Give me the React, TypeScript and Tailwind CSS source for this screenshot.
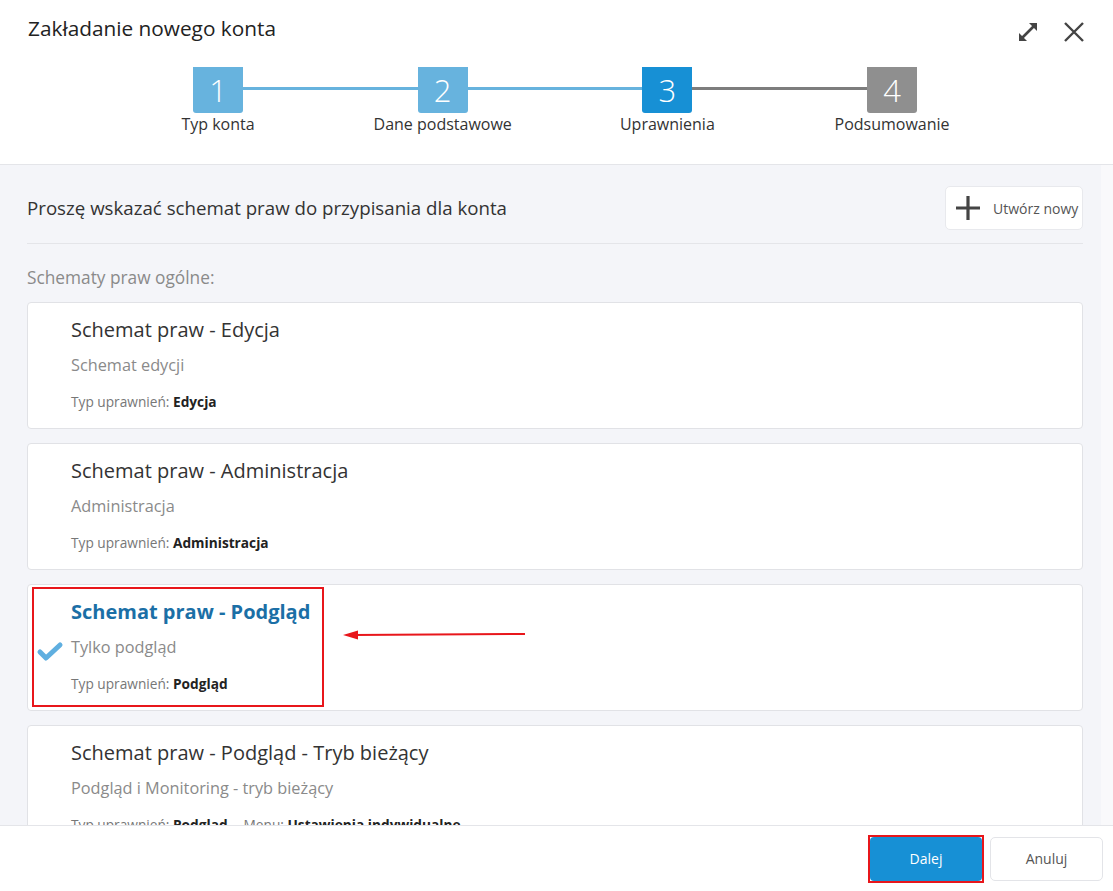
import React from 'react';

type Scheme = {
  id: number;
  title: string;
  description: string;
  type: string;
  menu?: string;
};

const schemes: Scheme[] = [
  { id: 1, title: 'Schemat praw - Edycja', description: 'Schemat edycji', type: 'Edycja' },
  { id: 2, title: 'Schemat praw - Administracja', description: 'Administracja', type: 'Administracja' },
  { id: 3, title: 'Schemat praw - Podgląd', description: 'Tylko podgląd', type: 'Podgląd' },
  {
    id: 4,
    title: 'Schemat praw - Podgląd - Tryb bieżący',
    description: 'Podgląd i Monitoring - tryb bieżący',
    type: 'Podgląd',
    menu: 'Ustawienia indywidualne',
  },
];

const steps = [
  { n: 1, label: 'Typ konta', box: 'bg-[#67b3de]' },
  { n: 2, label: 'Dane podstawowe', box: 'bg-[#67b3de]' },
  { n: 3, label: 'Uprawnienia', box: 'bg-[#1790d5]' },
  { n: 4, label: 'Podsumowanie', box: 'bg-[#8f8f8f]' },
];

const connectors = ['bg-[#67b3de]', 'bg-[#67b3de]', 'bg-[#7d7d7d]'];

function Stepper() {
  return (
    <div className="ml-[193px] mt-[23px] flex w-[724px] items-start">
      {steps.map((step, i) => (
        <React.Fragment key={step.n}>
          <div className="flex w-[50px] flex-col items-center">
            <div
              className={`flex h-[46px] w-[50px] items-center justify-center rounded-b-[3px] text-[31px] font-light leading-none text-white ${step.box}`}
            >
              {step.n}
            </div>
            <div className="whitespace-nowrap text-[16px] leading-[22px] text-[#333]">{step.label}</div>
          </div>
          {i < connectors.length && <div className={`mt-[20px] h-[3px] flex-1 ${connectors[i]}`} />}
        </React.Fragment>
      ))}
    </div>
  );
}

function SchemeCard({ scheme, selected }: { scheme: Scheme; selected: boolean }) {
  return (
    <div className="relative flex h-[127px] shrink-0 rounded-[4px] border border-[#e1e2e6] bg-white">
      {/* Check column */}
      <div className="w-[43px] shrink-0 pl-[8px] pt-[55px]">
        {selected && (
          <svg width="28" height="22" viewBox="0 0 28 22">
            <path d="M4 12 L10 18 L24 5" fill="none" stroke="#5fafe0" strokeWidth="5" strokeLinecap="round" strokeLinejoin="round" />
          </svg>
        )}
      </div>

      <div className="pt-[13px]">
        <div
          className={`text-[20px] leading-[27px] ${selected ? 'font-bold text-[#1b6fa6]' : 'text-[#333]'}`}
        >
          {scheme.title}
        </div>
        <div className="mt-[11px] text-[16.3px] leading-[22px] text-[#8a8a8a]">{scheme.description}</div>
        <div className="mt-[17px] flex text-[13.7px] leading-[18px] text-[#777]">
          <span>
            Typ uprawnień: <span className="font-bold text-[#222]">{scheme.type}</span>
          </span>
          {scheme.menu && (
            <span className="ml-[16px]">
              Menu: <span className="font-bold text-[#222]">{scheme.menu}</span>
            </span>
          )}
        </div>
      </div>

      {/* Annotation */}
      {selected && (
        <>
          <div className="pointer-events-none absolute left-[4px] top-[2px] h-[120px] w-[292px] border-2 border-[#e8161b]" />
          <svg className="pointer-events-none absolute left-[315px] top-[43px]" width="184" height="14" viewBox="0 0 184 14">
            <line x1="10" y1="7" x2="182" y2="6" stroke="#e8161b" strokeWidth="2" />
            <polygon points="0,7 15,2.5 15,11.5" fill="#e8161b" />
          </svg>
        </>
      )}
    </div>
  );
}

export default function App() {
  return (
    <div
      className="flex h-[891px] w-full flex-col overflow-hidden bg-white"
      style={{ fontFamily: '"Open Sans", "Noto Sans", sans-serif' }}
    >
      {/* Header */}
      <div className="h-[165px] shrink-0 border-b border-[#e4e5e9] bg-white">
        <div className="flex items-start justify-between pl-[28px] pr-[27px] pt-[14px]">
          <h1 className="text-[20.8px] leading-[28px] text-[#222]">Zakładanie nowego konta</h1>
          <div className="mt-[6px] flex items-center gap-[22px]">
            <svg width="24" height="24" viewBox="0 0 24 24">
              <line x1="6" y1="18" x2="18" y2="6" stroke="#444" strokeWidth="2.6" />
              <polygon points="21,3 13,3 21,11" fill="#444" />
              <polygon points="3,21 3,13 11,21" fill="#444" />
            </svg>
            <svg width="24" height="24" viewBox="0 0 24 24">
              <path d="M3 3 L21 21 M21 3 L3 21" stroke="#444" strokeWidth="2.4" />
            </svg>
          </div>
        </div>
        <Stepper />
      </div>

      {/* Content */}
      <div className="flex min-h-0 flex-1 bg-[#f4f5f9]">
        <div className="min-w-0 flex-1 overflow-hidden pl-[27px] pr-[18px]">
          <div className="mt-[21px] flex h-[44px] items-center justify-between">
            <p className="text-[18.7px] text-[#333]">Proszę wskazać schemat praw do przypisania dla konta</p>
            <button className="flex h-[44px] w-[138px] items-center rounded-[5px] border border-[#e8e9ed] bg-white pl-[9px] text-[14px] text-[#555]">
              <svg width="26" height="26" viewBox="0 0 26 26">
                <path d="M13 1 V25 M1 13 H25" stroke="#444" strokeWidth="3.2" />
              </svg>
              <span className="ml-[12px]">Utwórz nowy</span>
            </button>
          </div>
          <div className="mt-[13px] border-b border-[#e4e5e9]" />
          <div className="mt-[22px] text-[17.3px] leading-[23px] text-[#8a8a8a]">Schematy praw ogólne:</div>
          <div className="mt-[13px] flex flex-col gap-[14px]">
            {schemes.map((s) => (
              <SchemeCard key={s.id} scheme={s} selected={s.id === 3} />
            ))}
          </div>
        </div>
        <div className="w-[12px] shrink-0 bg-[#f9f9fb]" />
      </div>

      {/* Footer */}
      <div className="flex h-[66px] shrink-0 items-center justify-end gap-[8px] border-t border-[#e4e5e9] bg-white pr-[10px]">
        <div className="relative">
          <button className="h-[44px] w-[112px] rounded-[4px] bg-[#1790d5] text-[14px] text-white">Dalej</button>
          <div className="pointer-events-none absolute -inset-[2px] border-2 border-[#e8161b]" />
        </div>
        <button className="h-[44px] w-[113px] rounded-[5px] border border-[#e3e4e8] bg-white text-[14px] text-[#555]">
          Anuluj
        </button>
      </div>
    </div>
  );
}
